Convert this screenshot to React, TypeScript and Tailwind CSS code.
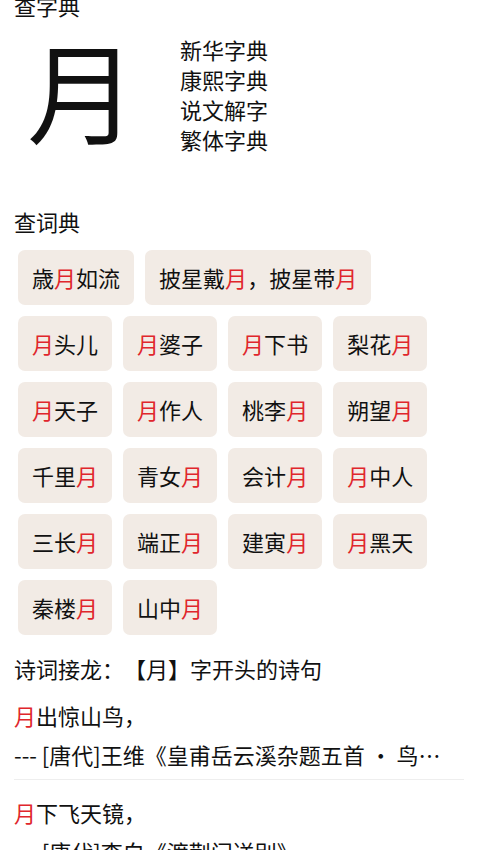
import React from "react"

const words: string[] = [
  "歳月如流",
  "披星戴月，披星带月",
  "月头儿",
  "月婆子",
  "月下书",
  "梨花月",
  "月天子",
  "月作人",
  "桃李月",
  "朔望月",
  "千里月",
  "青女月",
  "会计月",
  "月中人",
  "三长月",
  "端正月",
  "建寅月",
  "月黑天",
  "秦楼月",
  "山中月",
]

const poems = [
  { line: "月出惊山鸟，", from: "--- [唐代]王维《皇甫岳云溪杂题五首 • 鸟鸣涧》" },
  { line: "月下飞天镜，", from: "--- [唐代]李白《渡荆门送别》" },
]

function Mark({ text }: { text: string }) {
  // highlight every 月 in red
  return (
    <>
      {text.split("").map((c, i) =>
        c === "月" ? (
          <span key={i} className="text-[#e0262c]">
            {c}
          </span>
        ) : (
          <span key={i}>{c}</span>
        )
      )}
    </>
  )
}

export default function App() {
  return (
    <div
      className="min-h-[850px] overflow-hidden bg-white text-[#111] [text-spacing-trim:space-all]"
      style={{ fontFamily: '"Noto Sans CJK SC", "Noto Sans", sans-serif' }}
    >
      <div className="px-[14px]">
        {/* 查字典 */}
        <div className="-mt-[10px] text-[22px] leading-[30px]">查字典</div>
        <div className="mt-[14px] flex items-center">
          <div className="-mt-[12px] w-[136px] text-center text-[110px] leading-none">月</div>
          <div className="ml-[30px] flex flex-col text-[22px] leading-[30px]">
            <span>新华字典</span>
            <span>康熙字典</span>
            <span>说文解字</span>
            <span>繁体字典</span>
          </div>
        </div>

        {/* 查词典 */}
        <div className="mt-[52px] text-[22px] leading-[30px]">查词典</div>
        <div className="mt-[14px] flex flex-wrap gap-[11px] pl-[4px]">
          {words.map((w) => (
            <div
              key={w}
              className="flex h-[55px] items-center rounded-[7px] bg-[#f2ebe5] px-[14px] text-[22px]"
            >
              <Mark text={w} />
            </div>
          ))}
        </div>

        {/* 诗词接龙 */}
        <div className="mt-[18px] text-[22px] leading-[30px]">诗词接龙：【月】字开头的诗句</div>
        <div className="flex flex-col">
          {poems.map((p) => (
            <div key={p.line} className="border-b border-[#eeeeee] pt-[13px] pb-[5px] text-[22px] leading-[39px]">
              <div>
                <Mark text={p.line} />
              </div>
              <div className="truncate pr-[8px]">{p.from}</div>
            </div>
          ))}
        </div>
      </div>
    </div>
  )
}
